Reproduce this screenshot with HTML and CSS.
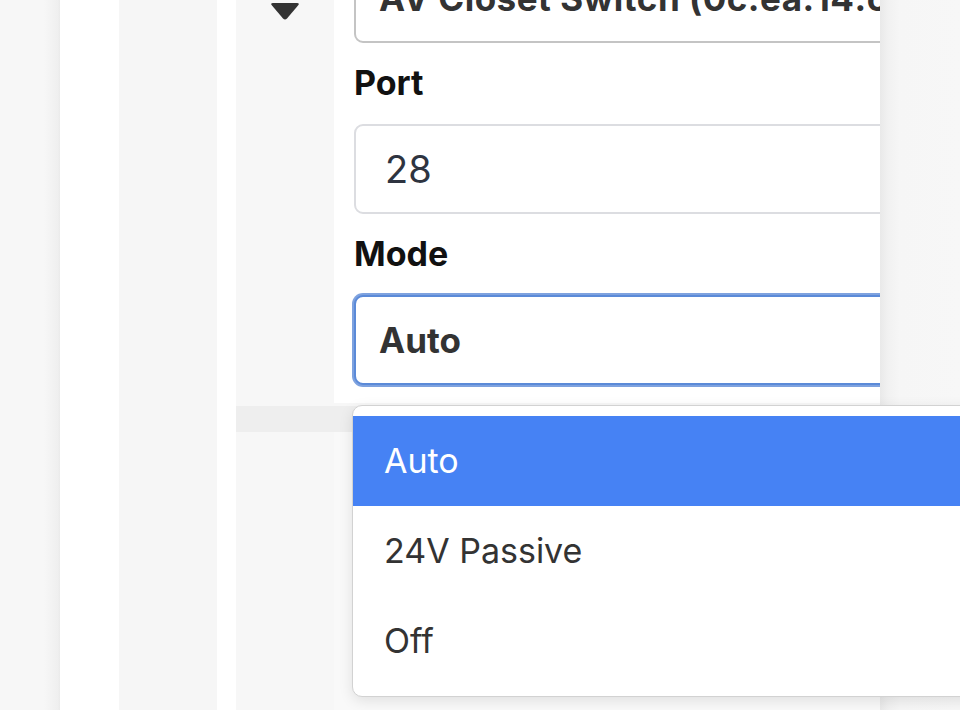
FILE: index.html
```html
<!DOCTYPE html>
<html lang="en">
<head>
<meta charset="utf-8">
<title>Port mode</title>
<link rel="stylesheet" href="styles.css">
</head>
<body>
<div class="app">
  <div class="rail"></div>
  <div class="gutter"></div>
  <div class="sidebar"></div>
  <div class="gutter gutter-narrow"></div>
  <div class="main">
    <div class="row">
      <div class="toggle-col">
        <svg class="caret" width="30" height="17" viewBox="0 0 30 17" aria-hidden="true">
          <path d="M3 0 H27 Q30 0 28 2.5 L17 15.5 Q15 17.5 13 15.5 L2 2.5 Q0 0 3 0 Z" fill="#333"/>
        </svg>
      </div>
      <div class="form">
        <div class="field select">AV Closet Switch (0c:ea:14:c4:1b:2e)</div>
        <div class="label">Port</div>
        <div class="field input">28</div>
        <div class="label">Mode</div>
        <div class="field select focused">Auto</div>
      </div>
    </div>
    <div class="divider"></div>
    <div class="rest">
      <div class="rest-left"></div>
      <div class="rest-right"></div>
    </div>
  </div>
  <div class="aside"></div>
</div>
<div class="dropdown">
  <div class="option selected">Auto</div>
  <div class="option">24V Passive</div>
  <div class="option">Off</div>
</div>
</body>
</html>
```
FILE: styles.css
```css
html, body {
  margin: 0;
  padding: 0;
  width: 960px;
  height: 710px;
  overflow: hidden;
  background: #f7f7f7;
  font-family: Inter, "Noto Sans", "Liberation Sans", sans-serif;
}

.app {
  display: flex;
  width: 960px;
  height: 710px;
}

.rail {
  width: 60px;
  flex: none;
  background: linear-gradient(to right, #f7f7f7 0, #f7f7f7 44px, #efefef 58px, #eaeaea 60px);
}

.gutter {
  width: 59px;
  flex: none;
  background: #ffffff;
}

.gutter-narrow {
  width: 19px;
}

.sidebar {
  width: 98px;
  flex: none;
  background: #f6f6f6;
}

.main {
  width: 644px;
  flex: none;
  display: flex;
  flex-direction: column;
  background: #f7f7f7;
}

.row {
  display: flex;
  height: 403px;
  flex: none;
}

.toggle-col {
  width: 98px;
  flex: none;
  background: #f7f7f7;
  display: flex;
  justify-content: center;
  align-items: flex-start;
}

.caret {
  display: block;
  margin-top: 3px;
}

.form {
  width: 546px;
  flex: none;
  background: #ffffff;
  overflow: hidden;
  padding-left: 20px;
  box-sizing: border-box;
}

.field {
  width: 620px;
  height: 90px;
  box-sizing: border-box;
  border: 2px solid #dcdde1;
  border-radius: 9px;
  display: flex;
  align-items: center;
  white-space: nowrap;
  background: #fff;
}

.form > .field:first-child {
  margin-top: -47px;
  letter-spacing: 0.5px;
}

.select {
  border-color: #c4c4c4;
  padding-left: 23px;
  font-weight: 700;
  font-size: 35px;
  color: #333333;
}

.input {
  padding-left: 29px;
  font-size: 38px;
  color: #2e3440;
}

.focused {
  margin-top: 1px;
  border-color: #5b8ad8;
  box-shadow: 0 0 0 2px #7ea2df;
}

.label {
  margin: 20px 0 21px;
  line-height: 40px;
  font-size: 34px;
  font-weight: 700;
  color: #111111;
}

.divider {
  height: 26px;
  margin-top: 3px;
  flex: none;
  background: #eeeeee;
}

.rest {
  flex: 1;
  display: flex;
}

.rest-left {
  width: 98px;
  flex: none;
  background: #f7f7f7;
}

.rest-right {
  flex: 1;
  background: #f9f9f9;
}

.aside {
  flex: 1;
  background: linear-gradient(to right, #e9e9e9 0, #f1f1f1 8px, #f6f6f6 20px, #f7f7f7 100%);
}

.dropdown {
  position: absolute;
  left: 352px;
  top: 405px;
  width: 700px;
  height: 292px;
  box-sizing: border-box;
  padding: 10px 0;
  background: #ffffff;
  border: 1px solid #d2d2d2;
  border-radius: 10px;
  box-shadow: 0 4px 14px rgba(0, 0, 0, 0.10);
}

.option {
  height: 90px;
  line-height: 90px;
  padding-left: 31px;
  font-size: 34px;
  color: #333333;
}

.option.selected {
  background: #4682f4;
  color: #ffffff;
}
```
